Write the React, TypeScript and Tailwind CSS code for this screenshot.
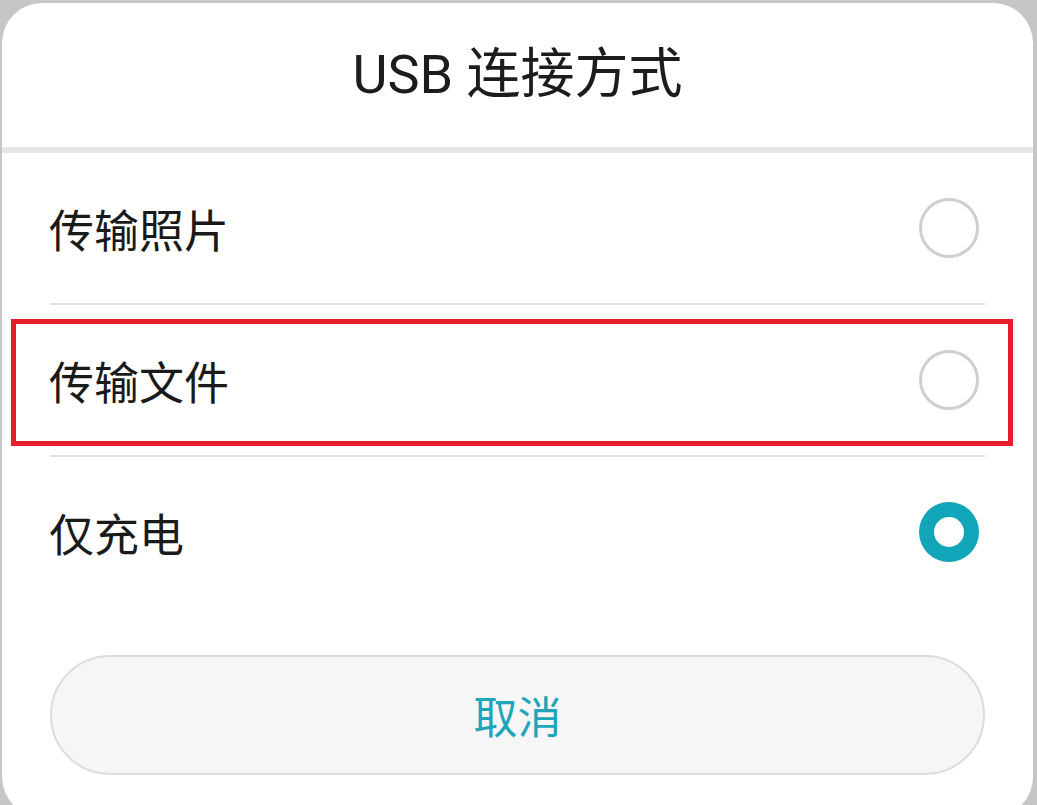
import React from "react";

const items = [
  { label: "传输照片", selected: false },
  { label: "传输文件", selected: false },
  { label: "仅充电", selected: true },
];

function Radio({ selected }: { selected: boolean }) {
  if (selected) {
    return (
      <div className="w-[60px] h-[60px] rounded-full bg-[#10a5b8] flex items-center justify-center">
        <div className="w-[30px] h-[30px] rounded-full bg-white" />
      </div>
    );
  }
  return <div className="w-[60px] h-[60px] rounded-full border-[3px] border-[#cfcfcf] bg-white" />;
}

export default function App() {
  return (
    <div
      className="relative w-[1037px] h-[805px] overflow-hidden bg-[#c6c6c6] pt-[3px] pl-[2px] pr-[4px]"
      style={{ fontFamily: '"Noto Sans CJK SC", "Noto Sans", sans-serif' }}
    >
      <div className="bg-white rounded-[40px] h-[814px] flex flex-col">
        <div className="h-[144px] flex items-center justify-center">
          <span
            className="text-[54px] text-[#1c1c1c] leading-none"
            style={{ fontFamily: 'Roboto, "Noto Sans CJK SC", sans-serif' }}
          >
            USB 连接方式
          </span>
        </div>
        <div className="h-[6px] bg-[#e6e6e6]" />
        {items.map((it, i) => (
          <React.Fragment key={it.label}>
            {i > 0 && <div className="mx-[48px] h-[2px] bg-[#e3e3e3]" />}
            <div className="h-[150px] flex items-center justify-between pl-[47px] pr-[54px]">
              <span className="text-[45px] leading-none text-[#1a1a1a]">{it.label}</span>
              <Radio selected={it.selected} />
            </div>
          </React.Fragment>
        ))}
        <div className="mt-[48px] mx-[48px] h-[120px] rounded-full bg-[#f6f6f6] border-2 border-[#dcdcdc] flex items-center justify-center">
          <span className="text-[44px] leading-none text-[#1ea5b7]">取消</span>
        </div>
      </div>
      <div className="absolute left-[11px] top-[319px] w-[1002px] h-[127px] border-[5px] border-[#e41e2a]" />
    </div>
  );
}
